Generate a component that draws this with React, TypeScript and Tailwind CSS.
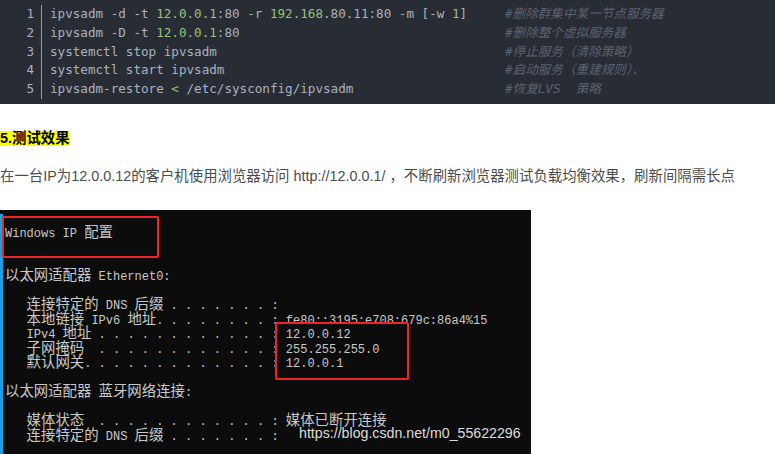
import React from "react";

const green = "text-[#98c379]";

const codeLines: { parts: [string, boolean][]; comment: string }[] = [
  {
    parts: [
      ["ipvsadm -d -t ", false],
      ["12.0.0.1", true],
      [":80 -r ", false],
      ["192.168", true],
      [".80.11:80 -m [-w ", false],
      ["1", true],
      ["]", false],
    ],
    comment: "#删除群集中某一节点服务器",
  },
  {
    parts: [
      ["ipvsadm -D -t ", false],
      ["12.0.0.1", true],
      [":80", false],
    ],
    comment: "#删除整个虚拟服务器",
  },
  { parts: [["systemctl stop ipvsadm", false]], comment: "#停止服务（清除策略）" },
  { parts: [["systemctl start ipvsadm", false]], comment: "#启动服务（重建规则）、" },
  {
    parts: [
      ["ipvsadm-restore ", false],
      ["<", true],
      [" /etc/sysconfig/ipvsadm", false],
    ],
    comment: "#恢复LVS  策略",
  },
];

const termLines = [
  "Windows IP 配置",
  "",
  "",
  "以太网适配器 Ethernet0:",
  "",
  "   连接特定的 DNS 后缀 . . . . . . . :",
  "   本地链接 IPv6 地址. . . . . . . . : fe80::3195:e708:679c:86a4%15",
  "   IPv4 地址 . . . . . . . . . . . . : 12.0.0.12",
  "   子网掩码  . . . . . . . . . . . . : 255.255.255.0",
  "   默认网关. . . . . . . . . . . . . : 12.0.0.1",
  "",
  "以太网适配器 蓝牙网络连接:",
  "",
  "   媒体状态  . . . . . . . . . . . . : 媒体已断开连接",
  "   连接特定的 DNS 后缀 . . . . . . . :",
];

// split a console line into runs of full-width and half-width text
function TermLine({ text }: { text: string }) {
  const runs = text.split(/([\u3000-\u9fff\uff00-\uffef]+)/).filter((s) => s.length > 0);
  return (
    <div className="h-[14.5px] whitespace-pre leading-[14.5px]">
      {runs.map((r, i) =>
        /[\u3000-\u9fff\uff00-\uffef]/.test(r) ? (
          <span key={i} className="font-['Noto_Sans_CJK_SC',sans-serif] text-[14.4px] leading-[14.5px]">
            {r}
          </span>
        ) : (
          <span key={i}>{r}</span>
        )
      )}
    </div>
  );
}

export default function App() {
  return (
    <div className="h-[454px] w-[775px] overflow-hidden bg-white">
      {/* code block */}
      <div className="flex h-[104px] bg-[#282c34] py-[5px] font-['DejaVu_Sans_Mono','Noto_Sans_CJK_SC',monospace] text-[12.6px] text-[#abb2bf]">
        <div className="w-[42px] border-r border-[#9a9da3] pr-[7px] text-right">
          {codeLines.map((_, i) => (
            <div key={i} className="h-[18.8px] leading-[18.8px]">
              {i + 1}
            </div>
          ))}
        </div>
        <div className="pl-[8px]">
          {codeLines.map((l, i) => (
            <div key={i} className="flex h-[18.8px] leading-[18.8px]">
              <div className="w-[455px] whitespace-pre">
                {l.parts.map(([t, g], j) => (
                  <span key={j} className={g ? green : ""}>
                    {t}
                  </span>
                ))}
              </div>
              <div className="whitespace-pre italic text-[#5c6370]">{l.comment}</div>
            </div>
          ))}
        </div>
      </div>

      {/* heading */}
      <div className="mt-[27px] flex font-['Liberation_Sans','Noto_Sans_CJK_SC',sans-serif]">
        <span className="h-[15px] bg-[#ffff00] text-[14.4px] font-bold leading-[15px] text-black">5.测试效果</span>
      </div>

      {/* paragraph */}
      <p className="mt-[19px] font-['Liberation_Sans','Noto_Sans_CJK_SC',sans-serif] text-[14.4px] leading-[22px] text-[#4d4d4d]">
        在一台IP为12.0.0.12的客户机使用浏览器访问 http://12.0.0.1/ ，不断刷新浏览器测试负载均衡效果，刷新间隔需长点
      </p>

      {/* console screenshot */}
      <div className="relative mt-[23px] flex h-[250px] w-[531px] bg-[#0c0c0c]">
        <div className="mt-[4px] w-[3px] bg-[#1a9fe6]" />
        <div className="pl-[2px] pt-[13.75px] font-['Liberation_Mono',monospace] text-[12px] text-[#c8c8c8]">
          {termLines.map((t, i) => (
            <TermLine key={i} text={t} />
          ))}
        </div>

        <div className="absolute left-[2px] top-[6px] h-[42px] w-[157px] rounded-[2px] border-2 border-[#f02424]" />
        <div className="absolute left-[275px] top-[112px] h-[58px] w-[134px] rounded-[2px] border-2 border-[#f02424]" />

        <div className="absolute left-[299px] top-[214px] font-['Liberation_Sans',sans-serif] text-[14.2px] leading-[18px] text-[#dcdcdc]">
          https://blog.csdn.net/m0_55622296
        </div>
      </div>
    </div>
  );
}
